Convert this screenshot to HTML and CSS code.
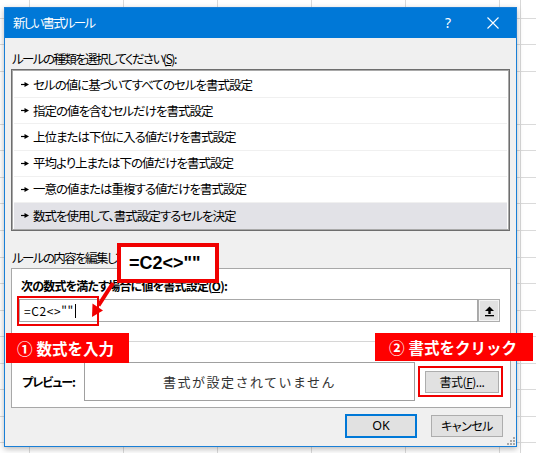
FILE: index.html
```html
<!DOCTYPE html>
<html lang="ja">
<head>
<meta charset="utf-8">
<title>新しい書式ルール</title>
<link rel="stylesheet" href="styles.css">
</head>
<body>
<div class="dialog">
  <div class="titlebar">
    <div class="title">新しい書式ルール</div>
    <div class="tb-help">?</div>
    <div class="tb-close">
      <svg width="12" height="12" viewBox="0 0 12 12"><path d="M0.5 0.5 L11.5 11.5 M11.5 0.5 L0.5 11.5" stroke="#fff" stroke-width="1.1" fill="none"/></svg>
    </div>
  </div>
  <div class="body">
    <div class="label">ルールの種類を選択してください(<u>S</u>):</div>
    <div class="list">
      <div class="row"><svg class="bullet" width="8" height="5" viewBox="0 0 8 5"><path d="M0 2.5h4" stroke="#000" stroke-width="1.2"/><path d="M3.5 0L8 2.5L3.5 5Z" fill="#000"/></svg><span>セルの値に基づいてすべてのセルを書式設定</span></div>
      <div class="row"><svg class="bullet" width="8" height="5" viewBox="0 0 8 5"><path d="M0 2.5h4" stroke="#000" stroke-width="1.2"/><path d="M3.5 0L8 2.5L3.5 5Z" fill="#000"/></svg><span>指定の値を含むセルだけを書式設定</span></div>
      <div class="row"><svg class="bullet" width="8" height="5" viewBox="0 0 8 5"><path d="M0 2.5h4" stroke="#000" stroke-width="1.2"/><path d="M3.5 0L8 2.5L3.5 5Z" fill="#000"/></svg><span>上位または下位に入る値だけを書式設定</span></div>
      <div class="row"><svg class="bullet" width="8" height="5" viewBox="0 0 8 5"><path d="M0 2.5h4" stroke="#000" stroke-width="1.2"/><path d="M3.5 0L8 2.5L3.5 5Z" fill="#000"/></svg><span>平均より上または下の値だけを書式設定</span></div>
      <div class="row"><svg class="bullet" width="8" height="5" viewBox="0 0 8 5"><path d="M0 2.5h4" stroke="#000" stroke-width="1.2"/><path d="M3.5 0L8 2.5L3.5 5Z" fill="#000"/></svg><span>一意の値または重複する値だけを書式設定</span></div>
      <div class="row selected"><svg class="bullet" width="8" height="5" viewBox="0 0 8 5"><path d="M0 2.5h4" stroke="#000" stroke-width="1.2"/><path d="M3.5 0L8 2.5L3.5 5Z" fill="#000"/></svg><span>数式を使用して、書式設定するセルを決定</span></div>
    </div>
    <div class="label label2">ルールの内容を編集してください(<u>E</u>):</div>
    <div class="group">
      <div class="glabel">次の数式を満たす場合に値を書式設定(<u>O</u>):</div>
      <div class="inputrow">
        <div class="input">=C2&lt;&gt;""<span class="caret"></span></div>
        <div class="collapse">
          <svg width="11" height="12" viewBox="0 0 11 12"><path d="M1 6L5.5 1.5L10 6Z" fill="#000"/><rect x="4.3" y="5.5" width="2.4" height="3.5" fill="#000"/><rect x="1" y="10" width="9" height="1.3" fill="#000"/></svg>
        </div>
      </div>
      <div class="sep"></div>
      <div class="previewrow">
        <div class="plabel">プレビュー:</div>
        <div class="preview">書式が設定されていません</div>
        <div class="btn fmt">書式(<u>F</u>)...</div>
      </div>
    </div>
    <div class="buttons">
      <div class="btn ok">OK</div>
      <div class="btn cancel">キャンセル</div>
    </div>
  </div>
  <svg class="grip" width="9" height="9" viewBox="0 0 9 9"><g fill="#a8a8a8"><rect x="7" y="1" width="2" height="2"/><rect x="4" y="4" width="2" height="2"/><rect x="7" y="4" width="2" height="2"/><rect x="1" y="7" width="2" height="2"/><rect x="4" y="7" width="2" height="2"/><rect x="7" y="7" width="2" height="2"/></g></svg>
</div>

<div class="callout">=C2&lt;&gt;""</div>
<svg class="arrow" width="40" height="44" viewBox="84 278 40 44"><path d="M113 283 L98.5 305.5" stroke="#f00000" stroke-width="4" fill="none"/><path d="M92 317 L103 310.5 L92.5 303.5 Z" fill="#f00000"/></svg>
<div class="hl-input"></div>
<div class="tag tag1"><span class="num">①</span>数式を入力</div>
<div class="tag tag2"><span class="num">②</span>書式をクリック</div>
<div class="hl-btn"></div>
</body>
</html>
```

FILE: styles.css
```css
html, body {
  margin: 0;
  padding: 0;
}
body {
  position: relative;
  width: 536px;
  height: 453px;
  overflow: hidden;
  font-family: "Noto Sans CJK JP", "Noto Sans", sans-serif;
  font-feature-settings: "palt";
  font-size: 12px;
  letter-spacing: -1px;
  color: #000;
  background-color: #fff;
  background-image:
    linear-gradient(90deg, transparent 520px, #d8d8d8 520px, #d8d8d8 521px, transparent 521px),
    repeating-linear-gradient(90deg, transparent 0, transparent 29px, #dadada 29px, #dadada 30px, transparent 30px, transparent 94px),
    repeating-linear-gradient(180deg, transparent 0, transparent 18px, #dadada 18px, #dadada 19px, transparent 19px, transparent 26.5px);
}
.dialog {
  position: relative;
  box-sizing: border-box;
  margin: 7px 0 0 4px;
  width: 513px;
  height: 440px;
  background: #f0f0f0;
  border: 1px solid #1a7fd6;
  box-shadow: 0 2px 6px rgba(0, 0, 0, 0.28);
  display: flex;
  flex-direction: column;
}
.titlebar {
  height: 30px;
  background: #0078d7;
  color: #fff;
  display: flex;
  align-items: center;
}
.title {
  flex: 1;
  padding-left: 8px;
  font-size: 12.5px;
  letter-spacing: -1.8px;
  line-height: 30px;
  margin-top: -1px;
}
.tb-help {
  width: 44px;
  text-align: center;
  font-family: "Noto Sans", sans-serif;
  font-size: 14px;
  letter-spacing: 0;
  line-height: 30px;
}
.tb-close {
  width: 46px;
  height: 30px;
  display: flex;
  align-items: center;
  justify-content: center;
}
.body {
  padding: 12px 6px 0 6px;
  display: flex;
  flex-direction: column;
}
.label {
  line-height: 17px;
  height: 17px;
  padding-left: 1px;
  font-size: 12.5px;
  letter-spacing: -1.6px;
}
.list {
  margin-top: 2px;
  height: 162px;
  box-sizing: border-box;
  border: 1px solid #6e6e6e;
  box-shadow: inset 0 0 0 1px #a9a9a9;
  background: #fff;
  padding: 2px 2px 1px 2px;
  display: flex;
  flex-direction: column;
}
.row {
  height: 26.5px;
  box-sizing: border-box;
  border-bottom: 1px solid #f0f0f0;
  display: flex;
  align-items: center;
  padding-left: 7px;
  gap: 4px;
  line-height: 16px;
  font-size: 12.5px;
}
.row:last-child {
  border-bottom: none;
}
.row.selected {
  background: #e2e2e7;
}
.label2 {
  margin-top: 18px;
}
.group {
  margin-top: 2px;
  box-sizing: border-box;
  width: 500px;
  border: 1px solid #a8a8a8;
  background: #fff;
  padding-top: 8px;
  padding-bottom: 6px;
  display: flex;
  flex-direction: column;
}
.glabel {
  font-weight: 700;
  line-height: 17px;
  padding-left: 9px;
  letter-spacing: -0.8px;
}
.inputrow {
  margin-top: 5px;
  margin-left: 7px;
  display: flex;
  height: 23px;
}
.input {
  box-sizing: border-box;
  width: 459px;
  height: 23px;
  border: 1px solid #a8a8a8;
  padding-left: 4px;
  line-height: 21px;
  display: flex;
  align-items: center;
  font-feature-settings: normal;
  letter-spacing: 0.6px;
}
.caret {
  display: inline-block;
  width: 1px;
  height: 14px;
  background: #000;
  margin-left: 1px;
}
.collapse {
  box-sizing: border-box;
  width: 22px;
  height: 23px;
  background: #e1e1e1;
  border: 1px solid #adadad;
  box-shadow: inset 0 0 0 1px #f4f4f4;
  display: flex;
  align-items: center;
  justify-content: center;
}
.sep {
  margin-top: 19px;
  height: 1px;
  background: #d6d6d6;
}
.previewrow {
  margin-top: 20px;
  display: flex;
  align-items: center;
  height: 39px;
}
.plabel {
  box-sizing: border-box;
  width: 72px;
  padding-left: 10px;
  font-weight: 700;
  line-height: 17px;
}
.preview {
  box-sizing: border-box;
  width: 331px;
  height: 39px;
  border: 1px solid #a0a0a0;
  display: flex;
  align-items: center;
  justify-content: center;
  font-size: 13px;
  font-feature-settings: normal;
  letter-spacing: 1.5px;
  color: #333;
}
.btn {
  box-sizing: border-box;
  height: 22px;
  background: #e1e1e1;
  border: 1px solid #adadad;
  display: flex;
  align-items: center;
  justify-content: center;
  line-height: 16px;
  letter-spacing: -0.5px;
}
.fmt {
  width: 74px;
  margin-left: 10px;
}
.buttons {
  margin-top: 7px;
  display: flex;
  justify-content: flex-end;
  gap: 15px;
  padding-right: 7px;
}
.ok {
  width: 70px;
  border-color: #0078d7;
  outline: 1px solid #0078d7;
  font-family: "Noto Sans", sans-serif;
  font-size: 12.5px;
  letter-spacing: 0;
}
.cancel {
  width: 72px;
}
.grip {
  position: absolute;
  right: 1px;
  bottom: 1px;
}
.callout {
  position: absolute;
  left: 117px;
  top: 243px;
  width: 102px;
  height: 40px;
  box-sizing: border-box;
  border: 4px solid #f00000;
  background: #fff;
  padding-left: 8px;
  display: flex;
  align-items: center;
  font-family: "Liberation Sans", Arial, sans-serif;
  font-weight: 700;
  font-size: 18px;
  letter-spacing: 0;
  color: #000;
}
.arrow {
  position: absolute;
  left: 84px;
  top: 278px;
}
.hl-input {
  position: absolute;
  left: 17px;
  top: 296px;
  width: 82px;
  height: 30px;
  box-sizing: border-box;
  border: 2px solid #f00000;
}
.tag {
  position: absolute;
  background: #ff0000;
  color: #fff;
  font-weight: 700;
  font-size: 15.5px;
  letter-spacing: 0;
  font-feature-settings: normal;
  display: flex;
  align-items: center;
  box-sizing: border-box;
  white-space: nowrap;
}
.num {
  margin-right: 4px;
}
.tag1 {
  left: 6px;
  top: 333px;
  width: 123px;
  height: 30px;
  padding-left: 11px;
}
.tag2 {
  left: 375px;
  top: 333px;
  width: 158px;
  height: 28px;
  padding-left: 14px;
}
.hl-btn {
  position: absolute;
  left: 418px;
  top: 366px;
  width: 85px;
  height: 31px;
  box-sizing: border-box;
  border: 2px solid #f00000;
}
```
